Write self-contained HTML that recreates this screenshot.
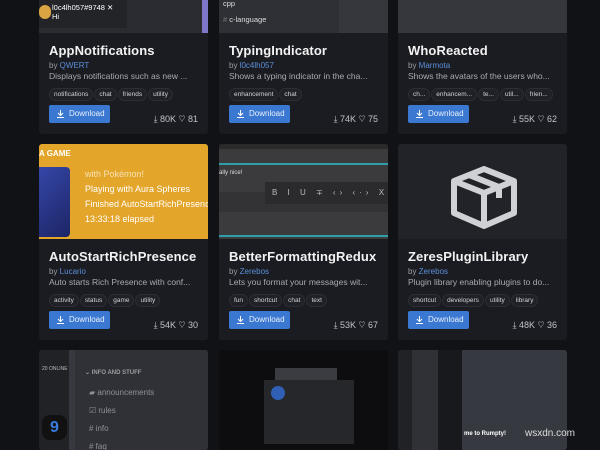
<!DOCTYPE html>
<html><head><meta charset="utf-8"><style>
*{margin:0;padding:0;box-sizing:border-box}
body{width:600px;height:446px;overflow:hidden;background:#111216;font-family:"Liberation Sans",sans-serif;position:relative}
.card{position:absolute;width:169px;background:#1b1c22;border-radius:3px;overflow:hidden}
.img{position:absolute;left:0;top:0;width:169px;overflow:hidden}
.body{position:absolute;left:10px;right:8px}
.t{font-weight:bold;font-size:13px;color:#f2f2f2;white-space:nowrap;letter-spacing:.1px}
.by{font-size:8px;color:#9a9ca3;margin-top:3px}
.by span{color:#5b8fd9}
.d{font-size:8.5px;color:#a8aab0;white-space:nowrap;margin-top:1px}
.tags{margin-top:2px;white-space:nowrap;height:13px}
.tag{display:inline-block;font-size:6.5px;color:#d0d1d5;background:#202127;border:1px solid #2c2e35;border-radius:7px;padding:2px 4px;margin-right:1px;line-height:7px}
.btn{position:absolute;left:0;width:61px;height:18px;background:#3a78d2;border-radius:2px;color:#eaf1fb;font-size:8px;line-height:18px;padding-left:20px}
.btn svg{position:absolute;left:8px;top:5px}
.st{position:absolute;right:2px;font-size:9px;color:#c0c2c7}
</style></head><body>

<div class="card" style="left:39px;top:-4px;height:138px">
 <div class="img" style="height:37px;background:#2b2c31">
  <div style="position:absolute;left:0;top:4px;width:88px;height:28px;background:#232428"></div>
  <div style="position:absolute;left:0;top:9px;width:12px;height:14px;border-radius:7px;background:#d9a441"></div>
  <div style="position:absolute;left:13px;top:7px;font-size:7.5px;color:#fff">l0c4lh057#9748 ✕</div>
  <div style="position:absolute;left:13px;top:16px;font-size:7.5px;color:#fff">Hi</div>
  <div style="position:absolute;left:163px;top:0;width:6px;height:37px;background:#7f77c9"></div>
 </div>
 <div class="body" style="top:47px">
  <div class="t">AppNotifications</div><div class="by">by <span>QWERT</span></div>
  <div class="d">Displays notifications such as new ...</div>
  <div class="tags"><span class="tag">notifications</span><span class="tag">chat</span><span class="tag">friends</span><span class="tag">utility</span></div>
 </div>
 <div class="body" style="top:109px;height:18px"><div class="btn"><svg width="7" height="8" viewBox="0 0 7 8"><path d="M3.5 0v5M1 3l2.5 2.5L6 3M0 7.5h7" stroke="#fff" fill="none"/></svg>Download</div><div class="st" style="top:9px">⤓ 80K ♡ 81</div></div>
</div>

<div class="card" style="left:219px;top:-4px;height:138px">
 <div class="img" style="height:37px;background:#2f3035">
  <div style="position:absolute;left:120px;top:0;width:49px;height:37px;background:#35373d"></div>
  <div style="position:absolute;left:4px;top:3px;font-size:7.5px;color:#ddd">cpp</div>
  <div style="position:absolute;left:4px;top:19px;font-size:7.5px;color:#ddd"><span style="color:#777">#</span> c-language</div>
 </div>
 <div class="body" style="top:47px">
  <div class="t">TypingIndicator</div><div class="by">by <span>l0c4lh057</span></div>
  <div class="d">Shows a typing indicator in the cha...</div>
  <div class="tags"><span class="tag">enhancement</span><span class="tag">chat</span></div>
 </div>
 <div class="body" style="top:109px;height:18px"><div class="btn"><svg width="7" height="8" viewBox="0 0 7 8"><path d="M3.5 0v5M1 3l2.5 2.5L6 3M0 7.5h7" stroke="#fff" fill="none"/></svg>Download</div><div class="st" style="top:9px">⤓ 74K ♡ 75</div></div>
</div>

<div class="card" style="left:398px;top:-4px;height:138px">
 <div class="img" style="height:37px;background:#36373c"></div>
 <div class="body" style="top:47px">
  <div class="t">WhoReacted</div><div class="by">by <span>Marmota</span></div>
  <div class="d">Shows the avatars of the users who...</div>
  <div class="tags"><span class="tag">ch...</span><span class="tag">enhancem...</span><span class="tag">te...</span><span class="tag">util...</span><span class="tag">frien...</span></div>
 </div>
 <div class="body" style="top:109px;height:18px"><div class="btn"><svg width="7" height="8" viewBox="0 0 7 8"><path d="M3.5 0v5M1 3l2.5 2.5L6 3M0 7.5h7" stroke="#fff" fill="none"/></svg>Download</div><div class="st" style="top:9px">⤓ 55K ♡ 62</div></div>
</div>

<div class="card" style="left:39px;top:144px;height:196px">
 <div class="img" style="height:95px;background:#e3a52a">
  <div style="position:absolute;left:0;top:5px;font-size:8px;font-weight:bold;color:#fff">A GAME</div>
  <div style="position:absolute;left:0;top:23px;width:31px;height:70px;border-radius:0 4px 4px 0;background:linear-gradient(135deg,#3546a8,#1d2565)"></div>
  <div style="position:absolute;left:46px;top:23px;font-size:9px;color:#f8e2b2;line-height:15px;white-space:nowrap">with Pokémon!<br><span style="color:#fff">Playing with Aura Spheres<br>Finished AutoStartRichPresence<br>13:33:18 elapsed</span></div>
 </div>
 <div class="body" style="top:105px">
  <div class="t">AutoStartRichPresence</div><div class="by">by <span>Lucario</span></div>
  <div class="d">Auto starts Rich Presence with conf...</div>
  <div class="tags"><span class="tag">activity</span><span class="tag">status</span><span class="tag">game</span><span class="tag">utility</span></div>
 </div>
 <div class="body" style="top:167px;height:18px"><div class="btn"><svg width="7" height="8" viewBox="0 0 7 8"><path d="M3.5 0v5M1 3l2.5 2.5L6 3M0 7.5h7" stroke="#fff" fill="none"/></svg>Download</div><div class="st" style="top:9px">⤓ 54K ♡ 30</div></div>
</div>

<div class="card" style="left:219px;top:144px;height:196px">
 <div class="img" style="height:95px;background:#3b3b3d">
  <div style="position:absolute;left:0;top:0;width:169px;height:5px;background:#2a2a2b"></div>
  <div style="position:absolute;left:0;top:19px;width:169px;height:2px;background:#2e9fa8"></div>
  <div style="position:absolute;left:0;top:26px;font-size:6px;color:#ddd">ally nice!</div>
  <div style="position:absolute;left:0;top:48px;width:169px;height:20px;background:#333335"></div>
  <div style="position:absolute;left:46px;top:38px;width:123px;height:22px;background:#2b2b2d;color:#bbb;font-size:8px;line-height:22px;padding-left:7px;white-space:nowrap;letter-spacing:4px">B I U ∓ ‹› ‹·› X²</div>
  <div style="position:absolute;left:0;top:91px;width:169px;height:2px;background:#2e9fa8"></div>
 </div>
 <div class="body" style="top:105px">
  <div class="t">BetterFormattingRedux</div><div class="by">by <span>Zerebos</span></div>
  <div class="d">Lets you format your messages wit...</div>
  <div class="tags"><span class="tag">fun</span><span class="tag">shortcut</span><span class="tag">chat</span><span class="tag">text</span></div>
 </div>
 <div class="body" style="top:167px;height:18px"><div class="btn"><svg width="7" height="8" viewBox="0 0 7 8"><path d="M3.5 0v5M1 3l2.5 2.5L6 3M0 7.5h7" stroke="#fff" fill="none"/></svg>Download</div><div class="st" style="top:9px">⤓ 53K ♡ 67</div></div>
</div>

<div class="card" style="left:398px;top:144px;height:196px">
 <div class="img" style="height:95px;background:#222329">
  <svg style="position:absolute;left:52px;top:22px" width="68" height="63" viewBox="0 0 68 63" fill="none" stroke="#d0d1d4" stroke-width="6" stroke-linejoin="round">
   <path d="M34 3L64 15V47L34 60L4 47V15Z"/><path d="M4 15L34 27L64 15M34 27V60"/><path d="M19 9L49 21V32" />
  </svg>
 </div>
 <div class="body" style="top:105px">
  <div class="t">ZeresPluginLibrary</div><div class="by">by <span>Zerebos</span></div>
  <div class="d">Plugin library enabling plugins to do...</div>
  <div class="tags"><span class="tag">shortcut</span><span class="tag">developers</span><span class="tag">utility</span><span class="tag">library</span></div>
 </div>
 <div class="body" style="top:167px;height:18px"><div class="btn"><svg width="7" height="8" viewBox="0 0 7 8"><path d="M3.5 0v5M1 3l2.5 2.5L6 3M0 7.5h7" stroke="#fff" fill="none"/></svg>Download</div><div class="st" style="top:9px">⤓ 48K ♡ 36</div></div>
</div>

<div class="card" style="left:39px;top:350px;height:100px;background:#36393f">
 <div style="position:absolute;left:0;top:0;width:30px;height:100px;background:#202225"></div>
 <div style="position:absolute;left:3px;top:16px;font-size:5px;color:#bbb">20 ONLINE</div>
 <div style="position:absolute;left:3px;top:65px;width:25px;height:25px;border-radius:8px;background:#111;color:#3b7be0;font-weight:bold;font-size:16px;text-align:center;line-height:25px">9</div>
 <div style="position:absolute;left:36px;top:0;width:133px;height:100px;background:#2f3136"></div>
 <div style="position:absolute;left:46px;top:19px;font-size:6px;color:#9a9ca0;font-weight:bold">⌄ INFO AND STUFF</div>
 <div style="position:absolute;left:50px;top:34px;font-size:8px;color:#8e9297;line-height:18px">▰ announcements<br>☑ rules<br># info<br># faq</div>
</div>
<div class="card" style="left:219px;top:350px;height:100px;background:#0d0d0f">
 <div style="position:absolute;left:56px;top:18px;width:62px;height:28px;background:#3a3c42"></div>
 <div style="position:absolute;left:45px;top:30px;width:90px;height:64px;background:#26272b"></div>
 <div style="position:absolute;left:52px;top:36px;width:14px;height:14px;border-radius:7px;background:#2f60b6"></div>
</div>
<div class="card" style="left:398px;top:350px;height:100px;background:#36393f">
 <div style="position:absolute;left:0;top:0;width:14px;height:100px;background:#202225"></div>
 <div style="position:absolute;left:14px;top:0;width:26px;height:100px;background:#2f3136"></div>
 <div style="position:absolute;left:40px;top:0;width:24px;height:100px;background:#18191c"></div>
 <div style="position:absolute;left:66px;top:81px;font-size:6px;color:#fff;font-weight:bold">me to Rumpty!</div>
</div>
<div style="position:absolute;left:525px;top:428px;font-size:10px;color:#ddd">wsxdn.com</div>
</body></html>
